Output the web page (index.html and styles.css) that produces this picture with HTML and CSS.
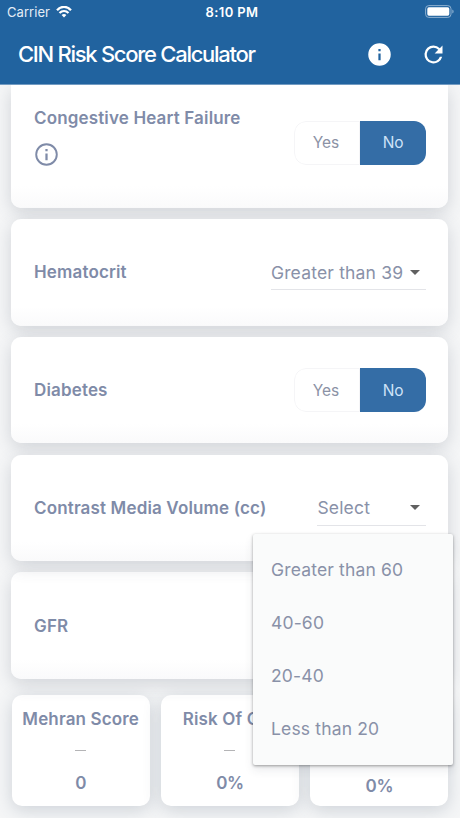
FILE: index.html
```html
<!DOCTYPE html>
<html lang="en">
<head>
<meta charset="utf-8">
<title>CIN Risk Score Calculator</title>
<link rel="stylesheet" href="styles.css">
</head>
<body>
<header class="appbar">
  <div class="status">
    <div class="carrier">Carrier
      <svg width="16" height="12" viewBox="0 0 16 12" fill="none" stroke="#fff" stroke-width="2.2"><path d="M1 4.2C5-.3 11-.3 15 4.2M3.5 7c2.6-2.7 6.4-2.7 9 0"/><path d="M8 11.5 5.6 9c1.4-1.3 3.4-1.3 4.8 0z" fill="#fff" stroke="none"/></svg>
    </div>
    <div class="clock">8:10 PM</div>
    <div class="power">
      <svg width="30" height="13" viewBox="0 0 30 13"><rect x=".6" y=".6" width="25.4" height="11.8" rx="3.2" fill="none" stroke="#8db0d0"/><rect x="2.3" y="2.3" width="22" height="8.4" rx="1.6" fill="#fff"/><path d="M27.3 4.5c1.8.6 1.8 3.4 0 4z" fill="#8db0d0"/></svg>
    </div>
  </div>
  <div class="toolbar">
    <h1>CIN Risk Score Calculator</h1>
    <svg class="info" width="27" height="27" viewBox="0 0 24 24" fill="#fff"><path d="M12 2a10 10 0 1 0 0 20 10 10 0 0 0 0-20zm1 15h-2v-6h2v6zm0-8h-2V7h2v2z"/></svg>
    <svg width="27" height="27" viewBox="0 0 24 24" fill="#fff"><path d="M17.65 6.35A7.96 7.96 0 0 0 12 4a8 8 0 1 0 7.73 10h-2.08A6 6 0 1 1 12 6c1.66 0 3.14.69 4.22 1.78L13 11h7V4l-2.35 2.35z"/></svg>
  </div>
</header>
<main class="list">
  <section class="card first">
    <div class="label">
      <h2>Congestive Heart Failure</h2>
      <svg width="27" height="27" viewBox="0 0 24 24" fill="#7f8ba8"><path d="M11 7h2v2h-2zm0 4h2v6h-2zm1-9a10 10 0 1 0 0 20 10 10 0 0 0 0-20zm0 18.3a8.3 8.3 0 1 1 0-16.6 8.3 8.3 0 0 1 0 16.6z"/></svg>
    </div>
    <div class="toggle"><span>Yes</span><span class="on">No</span></div>
  </section>
  <section class="card">
    <h2>Hematocrit</h2>
    <div class="select wide"><span>Greater than 39</span><i class="caret"></i></div>
  </section>
  <section class="card">
    <h2>Diabetes</h2>
    <div class="toggle"><span>Yes</span><span class="on">No</span></div>
  </section>
  <section class="card">
    <h2>Contrast Media Volume (cc)</h2>
    <div class="select"><span>Select</span><i class="caret"></i></div>
    <ul class="menu"><li>Greater than 60</li><li>40-60</li><li>20-40</li><li>Less than 20</li></ul>
  </section>
  <section class="card"><h2>GFR</h2></section>
</main>
<footer class="results">
  <div class="result"><h3>Mehran Score</h3><hr><b>0</b></div>
  <div class="result"><h3>Risk Of CIN</h3><hr><b>0%</b></div>
  <div class="result tall"><b>0%</b></div>
</footer>
</body>
</html>
```
FILE: styles.css
```css
* { box-sizing: border-box; }
body {
  margin: 0;
  width: 460px;
  height: 818px;
  overflow: hidden;
  background: #f5f6f7;
  color: #7f8ba8;
  font-family: Inter, "Liberation Sans", sans-serif;
}
h1, h2, h3, ul { margin: 0; padding: 0; }
svg { display: block; flex: none; }
.appbar {
  position: relative;
  z-index: 2;
  height: 85px;
  background: #21639f;
  border-bottom: 1px solid #729bc2;
  color: #fff;
}
.status {
  display: grid;
  grid-template-columns: 1fr auto 1fr;
  align-items: center;
  height: 24px;
  padding: 0 5px 0 7px;
  font-size: 13px;
}
.carrier { display: flex; align-items: center; gap: 6px; letter-spacing: .05px; color: #e4edf6; }
.clock { font-weight: 600; letter-spacing: .4px; padding-left: 2px; }
.power { display: flex; justify-content: flex-end; margin-top: -1px; }
.toolbar { display: flex; align-items: center; height: 60px; padding: 0 13.5px 0 18px; }
h1 { flex: 1; font-size: 22px; font-weight: 500; letter-spacing: -1.28px; white-space: nowrap; }
.info { margin-right: 26.5px; }
.list { display: flex; flex-direction: column; gap: 11.2px; padding: 0 11.6px 0 11px; }
.card {
  position: relative;
  display: flex;
  align-items: center;
  justify-content: space-between;
  height: 106.5px;
  padding: 0 22px 0 23px;
  border-radius: 10px;
  background: linear-gradient(#fff 82%, #fafafb);
  box-shadow: 0 5px 18px rgba(65, 75, 95, .2);
}
.card.first { height: 123px; border-radius: 0 0 10px 10px; padding-bottom: 8px; }
.card:nth-child(4) { z-index: 3; }
.card:last-child { z-index: 0; }
.label { display: flex; flex-direction: column; gap: 12px; margin-top: -11px; }
.label svg { margin-left: -1px; }
h2 { font-size: 17px; line-height: 22px; font-weight: 600; letter-spacing: .15px; white-space: nowrap; }
.toggle {
  display: grid;
  grid-template-columns: 66px 66.5px;
  height: 44px;
  border-radius: 12px;
  overflow: hidden;
  color: #8b92a5;
  font-size: 15.5px;
}
.toggle span {
  display: flex;
  align-items: center;
  justify-content: center;
  border: 1px solid #f5f5f7;
  border-radius: 12px 0 0 12px;
  padding-right: 2px;
}
.toggle .on { border: 0; border-radius: 0; padding: 0; background: #346da6; color: #cfe3f8; }
.select {
  display: flex;
  align-items: center;
  justify-content: space-between;
  width: 109px;
  height: 36px;
  padding: 1px 6px 0 0;
  border-bottom: 1px solid #e3e4e8;
  color: #8991a8;
  font-size: 17.5px;
  letter-spacing: .18px;
  white-space: nowrap;
}
.select.wide { width: 155.5px; }
.caret { border: 5px solid transparent; border-top-color: #606060; border-bottom: 0; }
.menu {
  position: absolute;
  left: 242px;
  top: 79px;
  width: 200px;
  height: 231px;
  padding: 9px 18px;
  border-radius: 2px;
  background: #fafbfb;
  box-shadow: 0 1px 3px rgba(0, 0, 0, .36), 0 5px 10px rgba(50, 60, 80, .1);
  list-style: none;
  color: #8991a8;
  font-size: 17.5px;
  letter-spacing: .16px;
  line-height: 53.3px;
}
.results { display: grid; grid-template-columns: repeat(3, 1fr); gap: 11px; padding: 16.5px 11.5px 0 11.5px; }
.result {
  display: flex;
  flex-direction: column;
  align-items: center;
  height: 111px;
  padding-top: 13px;
  border-radius: 10px;
  background: #fff;
  box-shadow: 0 4px 18px rgba(65, 80, 105, .22);
}
h3 { font-size: 17px; line-height: 22px; font-weight: 600; letter-spacing: .14px; white-space: nowrap; }
hr { width: 11px; height: 1px; margin: 20px 0 21px; border: 0; background: #b4b4b6; }
.result b { font-size: 17px; line-height: 22px; font-weight: 600; letter-spacing: -.4px; }
.tall { justify-content: flex-end; padding-bottom: 9px; }
```
